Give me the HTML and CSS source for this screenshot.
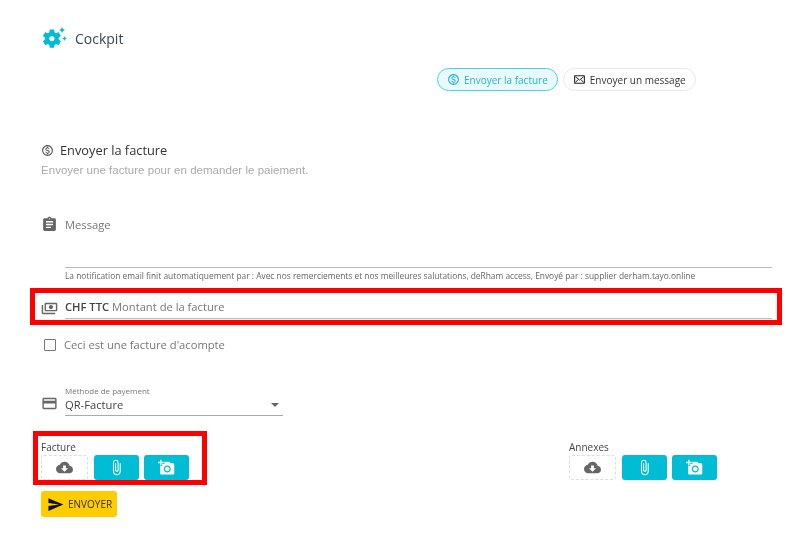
FILE: index.html
```html
<!DOCTYPE html>
<html lang="fr">
<head>
  <meta charset="UTF-8">
  <meta name="viewport" content="width=device-width, initial-scale=1.0">
  <title>Cockpit - Envoyer la facture</title>
  <link rel="stylesheet" href="styles.css">
</head>
<body>

  <svg class="sprites" width="0" height="0">
    <symbol id="i-dollar" viewBox="0 0 24 24"><path d="M12 2C6.48 2 2 6.48 2 12s4.48 10 10 10 10-4.48 10-10S17.52 2 12 2zm0 18c-4.41 0-8-3.59-8-8s3.59-8 8-8 8 3.59 8 8-3.59 8-8 8zm.31-8.86c-1.77-.45-2.34-.94-2.34-1.67 0-.84.79-1.43 2.1-1.43 1.38 0 1.9.66 1.94 1.64h1.71c-.05-1.34-.87-2.57-2.49-2.97V5H10.9v1.69c-1.51.32-2.72 1.3-2.72 2.81 0 1.79 1.49 2.69 3.66 3.21 1.95.46 2.34 1.15 2.34 1.87 0 .53-.39 1.39-2.1 1.39-1.6 0-2.23-.72-2.32-1.64H8.04c.1 1.7 1.36 2.66 2.86 2.97V19h2.34v-1.67c1.52-.29 2.72-1.16 2.73-2.77-.01-2.2-1.9-2.96-3.66-3.42z"/></symbol>
    <symbol id="i-cloud" viewBox="0 0 24 24"><path d="M19.35 10.04C18.67 6.59 15.64 4 12 4 9.11 4 6.6 5.64 5.35 8.04 2.34 8.36 0 10.91 0 14c0 3.31 2.69 6 6 6h13c2.76 0 5-2.24 5-5 0-2.64-2.05-4.78-4.65-4.96zM17 13l-5 5-5-5h3V9h4v4h3z"/></symbol>
    <symbol id="i-clip" viewBox="0 0 24 24"><path d="M16.5 6v11.5c0 2.21-1.79 4-4 4s-4-1.79-4-4V5c0-1.38 1.12-2.5 2.5-2.5s2.5 1.12 2.5 2.5v10.5c0 .55-.45 1-1 1s-1-.45-1-1V6H10v9.5c0 1.38 1.12 2.5 2.5 2.5s2.5-1.12 2.5-2.5V5c0-2.21-1.79-4-4-4S7 2.79 7 5v12.5c0 3.04 2.46 5.5 5.5 5.5s5.5-2.46 5.5-5.5V6h-1.5z"/></symbol>
    <symbol id="i-photo" viewBox="0 0 24 24"><path d="M3 4V1h2v3h3v2H5v3H3V6H0V4h3zm3 6V7h3V4h7l1.83 2H21c1.1 0 2 .9 2 2v12c0 1.1-.9 2-2 2H5c-1.1 0-2-.9-2-2V10h3zm7 9c2.76 0 5-2.24 5-5s-2.24-5-5-5-5 2.24-5 5 2.24 5 5 5zm-3.2-5c0 1.77 1.43 3.2 3.2 3.2s3.2-1.43 3.2-3.2-1.43-3.2-3.2-3.2-3.2 1.43-3.2 3.2z"/></symbol>
  </svg>

  <header class="entete">
    <svg class="logo" viewBox="0 0 24 24">
      <path transform="translate(-2.5 .2) scale(.95)" d="M19.14 12.94c.04-.3.06-.61.06-.94 0-.32-.02-.64-.07-.94l2.03-1.58c.18-.14.23-.41.12-.61l-1.92-3.32c-.12-.22-.37-.29-.59-.22l-2.39.96c-.5-.38-1.03-.7-1.62-.94l-.36-2.54c-.04-.24-.24-.41-.48-.41h-3.84c-.24 0-.43.17-.47.41l-.36 2.54c-.59.24-1.13.57-1.62.94l-2.39-.96c-.22-.08-.47 0-.59.22L2.74 8.87c-.12.21-.08.47.12.61l2.03 1.58c-.05.3-.09.63-.09.94s.02.64.07.94l-2.03 1.58c-.18.14-.23.41-.12.61l1.92 3.32c.12.22.37.29.59.22l2.39-.96c.5.38 1.03.7 1.62.94l.36 2.54c.05.24.24.41.48.41h3.84c.24 0 .44-.17.47-.41l.36-2.54c.59-.24 1.13-.56 1.62-.94l2.39.96c.22.08.47 0 .59-.22l1.92-3.32c.12-.22.07-.47-.12-.61l-2.01-1.58zM12 14.8c-1.55 0-2.8-1.25-2.8-2.8s1.25-2.8 2.8-2.8 2.8 1.25 2.8 2.8-1.25 2.8-2.8 2.8z"/>
      <path d="M19 0l1 2 2 1-2 1-1 2-1-2-2-1 2-1zM21.500 9l.8 1.700 1.700.8-1.700.8-.8 1.700-.8-1.700-1.700-.8 1.700-.8z"/>
    </svg>
    <span class="titre-app">Cockpit</span>
  </header>

  <div class="onglets">
    <a href="#" class="onglet actif">
      <svg viewBox="0 0 24 24"><use href="#i-dollar"/></svg>
      Envoyer la facture
    </a>
    <a href="#" class="onglet">
      <svg viewBox="0 0 24 24"><path d="M20 4H4c-1.1 0-2 .9-2 2v12c0 1.1.9 2 2 2h16c1.100 0 2-.9 2-2V6c0-1.100-.9-2-2-2zm0 14H4V6h16z"/><path d="M4.500 7l7.500 6 7.500-6M4.500 17.500l5-5.500M19.500 17.500l-5-5.500" fill="none" stroke="#222" stroke-width="1.800"/></svg>
      Envoyer un message
    </a>
  </div>

  <main class="formulaire">
    <h2><svg viewBox="0 0 24 24"><use href="#i-dollar"/></svg>Envoyer la facture</h2>
    <p class="sous-titre">Envoyer une facture pour en demander le paiement.</p>

    <div class="champ champ-message">
      <svg class="icone" viewBox="0 0 24 24"><path d="M19 3h-4.180C14.400 1.840 13.300 1 12 1c-1.300 0-2.400.84-2.820 2H5c-1.100 0-2 .9-2 2v14c0 1.100.9 2 2 2h14c1.100 0 2-.9 2-2V5c0-1.100-.9-2-2-2zm-7 0c.55 0 1 .45 1 1s-.45 1-1 1-1-.45-1-1 .45-1 1-1zm2 14H7v-2h7v2zm3-4H7v-2h10v2zm0-4H7V7h10v2z"/></svg>
      <div class="saisie">Message</div>
    </div>
    <p class="aide">La notification email finit automatiquement par : Avec nos remerciements et nos meilleures salutations, deRham access, Envoyé par : supplier derham.tayo.online</p>

    <div class="champ champ-montant">
      <div class="surligne"></div>
      <svg class="icone" viewBox="0 0 24 24"><path transform="matrix(-1 0 0 1 24 0)" d="M19 14V6c0-1.100-.9-2-2-2H3c-1.100 0-2 .9-2 2v8c0 1.100.9 2 2 2h14c1.100 0 2-.9 2-2zm-2 0H3V6h14v8zm-7-7c-1.660 0-3 1.340-3 3s1.340 3 3 3 3-1.340 3-3-1.340-3-3-3zm13 0v11c0 1.100-.9 2-2 2H4v-2h17V7h2z"/></svg>
      <div class="saisie"><b>CHF TTC</b> Montant de la facture</div>
    </div>

    <label class="case">
      <span class="carre"></span>
      Ceci est une facture d'acompte
    </label>

    <div class="champ champ-methode">
      <svg class="icone" viewBox="0 0 24 24"><path d="M20 4H4c-1.110 0-1.990.89-1.990 2L2 18c0 1.110.89 2 2 2h16c1.110 0 2-.89 2-2V6c0-1.110-.89-2-2-2zm0 14H4v-6h16v6zm0-10H4V6h16v2z"/></svg>
      <div class="selection">
        <small>Méthode de payement</small>
        <div class="valeur">QR-Facture<span class="fleche"></span></div>
      </div>
    </div>

    <div class="fichiers">
      <div class="bloc-fichier">
        <div class="surligne"></div>
        <div class="nom-fichier">Facture</div>
        <div class="boutons-fichier">
          <div class="depot"><svg viewBox="0 0 24 24"><use href="#i-cloud"/></svg></div>
          <button class="ajout"><svg viewBox="0 0 24 24"><use href="#i-clip"/></svg></button>
          <button class="ajout"><svg viewBox="0 0 24 24"><use href="#i-photo"/></svg></button>
        </div>
      </div>
      <div class="bloc-fichier">
        <div class="nom-fichier">Annexes</div>
        <div class="boutons-fichier">
          <div class="depot"><svg viewBox="0 0 24 24"><use href="#i-cloud"/></svg></div>
          <button class="ajout"><svg viewBox="0 0 24 24"><use href="#i-clip"/></svg></button>
          <button class="ajout"><svg viewBox="0 0 24 24"><use href="#i-photo"/></svg></button>
        </div>
      </div>
    </div>

    <button class="envoyer">
      <svg viewBox="0 0 24 24"><path d="M2.010 21L23 12 2.010 3 2 10l15 2-15 2z"/></svg>
      ENVOYER
    </button>
  </main>

</body>
</html>
```

FILE: styles.css
```css
* {
  margin: 0;
  padding: 0;
  box-sizing: border-box;
  font-family: "Open Sans", sans-serif;
}

body {
  background: white;
  color: #555;
  font-size: 11.2px;
  height: 538px;
  overflow: hidden;
  filter: blur(.35px); /* la capture est un peu floue */
}

.sprites {
  position: absolute;
}

/* Entete */
.entete {
  display: flex;
  gap: 8px;
  padding: 27px 0 0 43px;
  height: 51px;
}
.logo {
  width: 24px;
  height: 24px;
  fill: #00bcd4;
}
.titre-app {
  font-size: 14px;
  line-height: 23px;
  color: #3c4450;
}

/* Onglets */
.onglets {
  display: flex;
  gap: 5px;
  margin: 17px 0 0 437px;
}
.onglet {
  display: flex;
  align-items: center;
  gap: 4px;
  height: 23px;
  padding: 0 9px;
  border: 1px solid #e8e8e8;
  border-radius: 12px;
  color: #333;
  font-size: 10px;
  text-decoration: none;
  white-space: nowrap;
}
.onglet svg {
  width: 13px;
  height: 13px;
  fill: #222;
}
.onglet.actif {
  border: 1px solid #4dd0e1;
  background: #e8fafc;
  color: #26b5c8;
}
.onglet.actif svg {
  fill: #26b5c8;
}

/* Formulaire */
.formulaire {
  padding: 50px 37px 0 41px;
}
h2 {
  display: flex;
  align-items: center;
  gap: 6px;
  font-size: 12.8px;
  font-weight: 400;
  color: #333;
  height: 18px;
}
h2 svg {
  width: 13px;
  height: 13px;
  fill: #555;
}
.sous-titre {
  margin-top: 5px;
  font-family: "Liberation Sans", sans-serif;
  font-size: 11.5px;
  color: #aaa;
  letter-spacing: .03px;
}

.champ {
  display: flex;
  position: relative;
}
.icone {
  width: 17px;
  height: 17px;
  flex: none;
  margin-right: 7px;
  fill: #666;
}
.saisie {
  flex: 1;
  padding-top: 1px;
  border-bottom: 1px solid #bbb;
  color: #777;
}
.saisie b {
  font-weight: 600;
  color: #444;
}
.champ-message {
  margin-top: 40px;
}
.champ-message .saisie {
  height: 52px;
}
.aide {
  margin: 3px 0 0 24px;
  font-size: 8.4px;
  line-height: 10px;
  color: #666;
  white-space: nowrap;
}
.champ-montant {
  margin-top: 17px;
  height: 21px;
}
.champ-montant .icone {
  margin-top: 2px;
}
.surligne {
  position: absolute;
  border: 5px solid #f00;
  pointer-events: none;
}
.champ-montant .surligne {
  left: -11px;
  right: -10px;
  top: -10px;
  bottom: -6px;
}

.case {
  display: flex;
  align-items: center;
  gap: 8px;
  margin: 18px 0 0 3px;
  color: #777;
}
.carre {
  width: 12px;
  height: 12px;
  border: 1.5px solid #777;
  border-radius: 1px;
}

.champ-methode {
  margin-top: 32px;
  width: 242px;
}
.champ-methode .icone {
  margin-top: 11px;
}
.selection {
  flex: 1;
  border-bottom: 1px solid #aaa;
  height: 32px;
}
.selection small {
  display: block;
  font-size: 8px;
  line-height: 13px;
  color: #777;
}
.valeur {
  display: flex;
  align-items: center;
  justify-content: space-between;
  padding-right: 4px;
  color: #444;
  line-height: 16px;
}
.fleche {
  border: 4px solid transparent;
  border-top: 4px solid #666;
  border-bottom: 0;
}

/* Fichiers */
.fichiers {
  display: grid;
  grid-template-columns: 528px 1fr;
  margin-top: 24px;
}
.bloc-fichier {
  position: relative;
}
.bloc-fichier .surligne {
  left: -8px;
  top: -9px;
  width: 174px;
  height: 54px;
}
.nom-fichier {
  font-size: 10px;
  line-height: 14px;
  color: #444;
}
.boutons-fichier {
  display: flex;
  gap: 5px;
  margin-top: 1px;
}
.depot {
  display: flex;
  align-items: center;
  justify-content: center;
  width: 47px;
  height: 25px;
  margin-right: 1px;
  border: 1px dashed #ddd;
  border-radius: 3px;
}
.depot svg {
  width: 17px;
  height: 17px;
  fill: #666;
}
.ajout {
  display: flex;
  align-items: center;
  justify-content: center;
  width: 45px;
  height: 25px;
  border: none;
  border-radius: 3px;
  background: #00bcd4;
}
.ajout svg {
  width: 17px;
  height: 17px;
  fill: white;
}

.envoyer {
  display: flex;
  align-items: center;
  gap: 4px;
  margin-top: 11px;
  height: 26px;
  width: 76px;
  padding-left: 6px;
  border: none;
  border-radius: 3px;
  background: #ffcc00;
  color: #333;
  font-size: 10px;
}
.envoyer svg {
  width: 17px;
  height: 17px;
  fill: #111;
}
```
